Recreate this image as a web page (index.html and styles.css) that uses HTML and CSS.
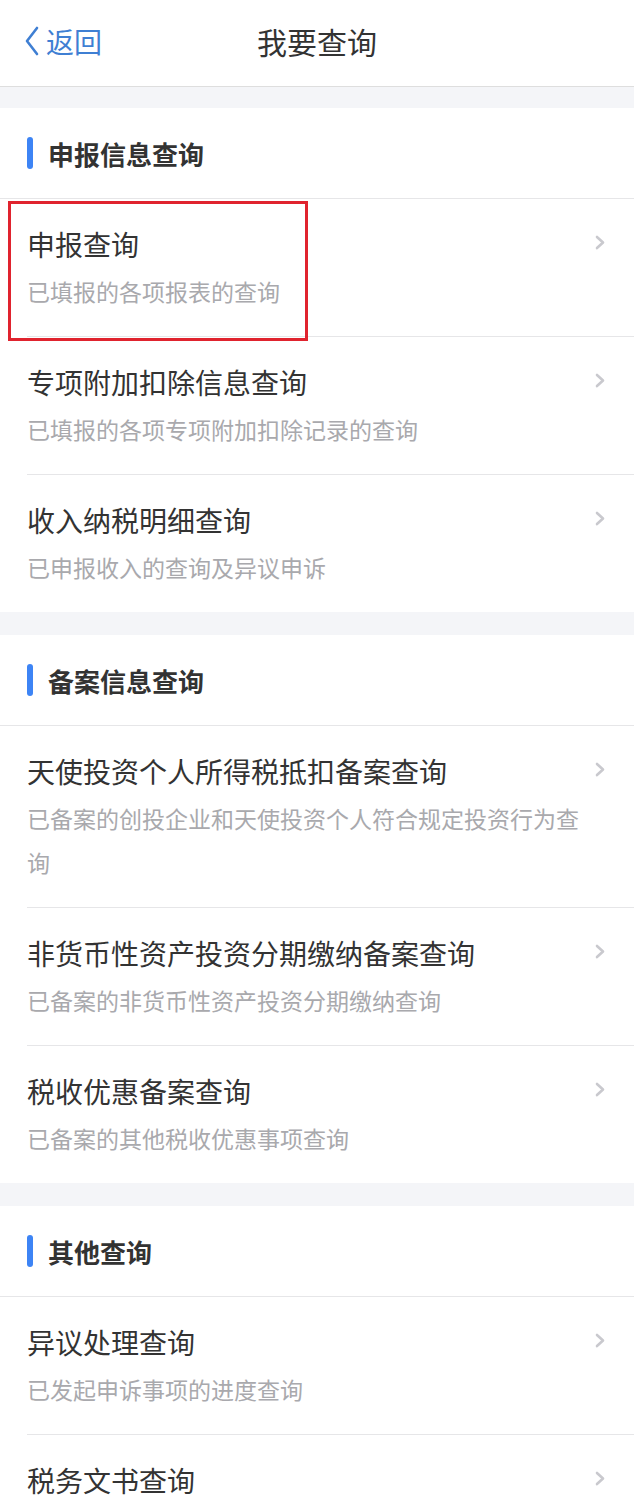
FILE: index.html
```html
<!DOCTYPE html>
<html lang="zh-CN">
<head>
<meta charset="utf-8">
<title>我要查询</title>
<link rel="stylesheet" href="styles.css">
</head>
<body>
<div class="page">
  <header class="nav">
    <div class="back">
      <svg class="back-icon" width="16" height="30" viewBox="0 0 16 30"><polyline points="13,2 3,15 13,28" fill="none" stroke="#3f7fd3" stroke-width="2.6" stroke-linecap="round" stroke-linejoin="round"/></svg>
      <span>返回</span>
    </div>
    <div class="nav-title">我要查询</div>
  </header>

  <section class="group">
    <div class="group-head"><span class="bar"></span><span>申报信息查询</span></div>
    <div class="item highlighted">
      <div class="item-text">
        <div class="item-title">申报查询</div>
        <div class="item-sub">已填报的各项报表的查询</div>
      </div>
      <svg class="chev" width="10" height="15" viewBox="0 0 10 15"><polyline points="2,2 8,7.5 2,13" fill="none" stroke="#c9c9ce" stroke-width="2.6" stroke-linecap="round" stroke-linejoin="round"/></svg>
      <div class="mark"></div>
    </div>
    <div class="item">
      <div class="item-text">
        <div class="item-title">专项附加扣除信息查询</div>
        <div class="item-sub">已填报的各项专项附加扣除记录的查询</div>
      </div>
      <svg class="chev" width="10" height="15" viewBox="0 0 10 15"><polyline points="2,2 8,7.5 2,13" fill="none" stroke="#c9c9ce" stroke-width="2.6" stroke-linecap="round" stroke-linejoin="round"/></svg>
    </div>
    <div class="item">
      <div class="item-text">
        <div class="item-title">收入纳税明细查询</div>
        <div class="item-sub">已申报收入的查询及异议申诉</div>
      </div>
      <svg class="chev" width="10" height="15" viewBox="0 0 10 15"><polyline points="2,2 8,7.5 2,13" fill="none" stroke="#c9c9ce" stroke-width="2.6" stroke-linecap="round" stroke-linejoin="round"/></svg>
    </div>
  </section>

  <section class="group">
    <div class="group-head"><span class="bar"></span><span>备案信息查询</span></div>
    <div class="item">
      <div class="item-text">
        <div class="item-title">天使投资个人所得税抵扣备案查询</div>
        <div class="item-sub">已备案的创投企业和天使投资个人符合规定投资行为查询</div>
      </div>
      <svg class="chev" width="10" height="15" viewBox="0 0 10 15"><polyline points="2,2 8,7.5 2,13" fill="none" stroke="#c9c9ce" stroke-width="2.6" stroke-linecap="round" stroke-linejoin="round"/></svg>
    </div>
    <div class="item">
      <div class="item-text">
        <div class="item-title">非货币性资产投资分期缴纳备案查询</div>
        <div class="item-sub">已备案的非货币性资产投资分期缴纳查询</div>
      </div>
      <svg class="chev" width="10" height="15" viewBox="0 0 10 15"><polyline points="2,2 8,7.5 2,13" fill="none" stroke="#c9c9ce" stroke-width="2.6" stroke-linecap="round" stroke-linejoin="round"/></svg>
    </div>
    <div class="item">
      <div class="item-text">
        <div class="item-title">税收优惠备案查询</div>
        <div class="item-sub">已备案的其他税收优惠事项查询</div>
      </div>
      <svg class="chev" width="10" height="15" viewBox="0 0 10 15"><polyline points="2,2 8,7.5 2,13" fill="none" stroke="#c9c9ce" stroke-width="2.6" stroke-linecap="round" stroke-linejoin="round"/></svg>
    </div>
  </section>

  <section class="group">
    <div class="group-head"><span class="bar"></span><span>其他查询</span></div>
    <div class="item">
      <div class="item-text">
        <div class="item-title">异议处理查询</div>
        <div class="item-sub">已发起申诉事项的进度查询</div>
      </div>
      <svg class="chev" width="10" height="15" viewBox="0 0 10 15"><polyline points="2,2 8,7.5 2,13" fill="none" stroke="#c9c9ce" stroke-width="2.6" stroke-linecap="round" stroke-linejoin="round"/></svg>
    </div>
    <div class="item">
      <div class="item-text">
        <div class="item-title">税务文书查询</div>
      </div>
      <svg class="chev" width="10" height="15" viewBox="0 0 10 15"><polyline points="2,2 8,7.5 2,13" fill="none" stroke="#c9c9ce" stroke-width="2.6" stroke-linecap="round" stroke-linejoin="round"/></svg>
    </div>
  </section>
</div>
</body>
</html>
```

FILE: styles.css
```css
* { box-sizing: border-box; }
html, body { margin: 0; padding: 0; }
body {
  background: #f4f5f8;
  font-family: "Noto Sans CJK SC", "Noto Sans", sans-serif;
  color: #333;
  overflow: hidden;
}
.page {
  width: 634px;
  height: 1508px;
  overflow: hidden;
}
.nav {
  height: 87px;
  background: #fff;
  border-bottom: 1px solid #dedede;
  display: flex;
  align-items: center;
  justify-content: center;
  position: relative;
  margin-bottom: 21px;
}
.back {
  position: absolute;
  left: 24px;
  top: 25px;
  display: flex;
  align-items: center;
  gap: 6px;
  color: #3f7fd3;
  font-size: 28px;
  line-height: 32px;
}
.back-icon { display: block; }
.nav-title {
  font-size: 30px;
  line-height: 40px;
  color: #333;
  margin-top: -4px;
}
.group {
  background: #fff;
  margin-bottom: 23px;
}
.group-head {
  height: 91px;
  border-bottom: 1px solid #e6e6e8;
  display: flex;
  align-items: center;
  padding-left: 27px;
  gap: 15px;
  font-size: 26px;
  font-weight: 700;
  color: #333;
}
.bar {
  width: 6px;
  height: 32px;
  border-radius: 3px;
  background: #3d84f5;
}
.item {
  margin-left: 27px;
  display: flex;
  align-items: flex-start;
  padding: 24px 29px 23px 0;
  border-bottom: 1px solid #e6e6e8;
  position: relative;
}
.item:last-child { border-bottom: none; }
.item-text {
  flex: 1;
  min-width: 0;
  padding-right: 12px;
}
.item-title {
  font-size: 28px;
  line-height: 42px;
  color: #333;
}
.item-sub {
  margin-top: 4px;
  font-size: 23px;
  line-height: 44px;
  color: #a9a9ad;
}
.chev {
  display: block;
  margin-top: 12px;
  flex: none;
}
.mark {
  position: absolute;
  left: -19px;
  top: 2px;
  width: 300px;
  height: 140px;
  border: 3px solid #e0232e;
  pointer-events: none;
}
```
